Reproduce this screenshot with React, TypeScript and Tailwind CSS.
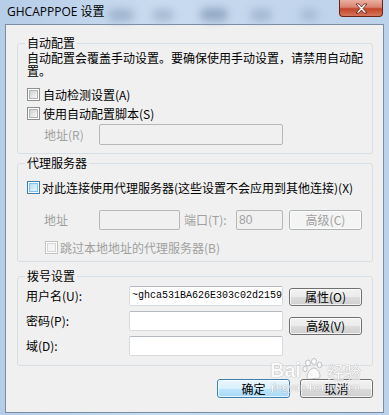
import React from 'react';

const cjk = { fontFamily: "'Noto Sans CJK SC', 'Noto Sans', sans-serif" };

function CheckBox({ tone = 'normal' }: { tone?: 'normal' | 'hot' | 'off' }) {
  const outer =
    tone === 'hot' ? 'border-[#3c7fb1]' : tone === 'off' ? 'border-[#c3c3c3]' : 'border-[#8e8f8f]';
  const inner =
    tone === 'hot'
      ? 'border-[#79c6f9] bg-[linear-gradient(135deg,#b9def6,#eaf6fd)]'
      : tone === 'off'
        ? 'border-[#d6d6d6] bg-[#f4f4f4]'
        : 'border-[#b3b3b3] bg-[linear-gradient(135deg,#cfd1d4,#f7f7f7)]';
  return (
    <div className={`w-[13px] h-[13px] shrink-0 border ${outer} bg-white p-px`}>
      <div className={`w-full h-full border ${inner}`} />
    </div>
  );
}

function Field({ w, h = 'h-[21px]', off = false, children }: { w: string; h?: string; off?: boolean; children?: React.ReactNode }) {
  return (
    <div
      className={`${w} ${h} shrink-0 rounded-[2px] border flex items-center px-[2px] ${
        off ? 'border-[#b4b8bb] bg-[#f0f0f0]' : 'border-[#d7dbe0] border-t-[#b5b9c0] bg-white'
      }`}
    >
      {children}
    </div>
  );
}

function Button({ w = 'w-[73px]', h = 'h-[19px]', off = false, primary = false, children }: { w?: string; h?: string; off?: boolean; primary?: boolean; children: React.ReactNode }) {
  const skin = off
    ? 'border-[#adb2b5] bg-[#f4f4f4] text-[#a0a0a0]'
    : primary
      ? 'border-[#3c7fb1] bg-[linear-gradient(#eaf6fd,#d9f0fc_50%,#bee6fd_50%,#a7d9f5)] text-black'
      : 'border-[#707070] bg-[linear-gradient(#f2f2f2,#ebebeb_50%,#dddddd_50%,#cfcfcf)] text-black';
  return (
    <div className={`${w} ${h} shrink-0 rounded-[3px] border ${skin} flex items-center justify-center`}>
      <div className="w-full h-full rounded-[2px] border border-white/70 flex items-center justify-center text-[12px] leading-none">
        {children}
      </div>
    </div>
  );
}

function Group({ title, className = '', children }: { title: string; className?: string; children: React.ReactNode }) {
  return (
    <fieldset className={`border border-[#d5dfe5] rounded-[3px] px-0 ${className}`}>
      <legend className="ml-[7px] px-[2px] text-[12px] leading-[14px]">{title}</legend>
      {children}
    </fieldset>
  );
}

export default function App() {
  return (
    <div
      className="relative w-[389px] h-[415px] overflow-hidden flex flex-col bg-[linear-gradient(90deg,#b6cde8,#c9dbef_40%,#bcd1ea)] text-black"
      style={cjk}
    >
      {/* Title bar */}
      <div className="relative h-[24px] shrink-0 flex items-start">
        <div className="absolute left-[108px] top-[9px] w-[26px] h-[12px] rounded-full bg-[#8ea4bf] blur-[4px] opacity-70" />
        <div className="absolute left-[152px] top-[9px] w-[22px] h-[12px] rounded-full bg-[#8ea4bf] blur-[4px] opacity-60" />
        <div className="absolute left-[200px] top-[8px] w-[28px] h-[13px] rounded-full bg-[#7e95b2] blur-[4px] opacity-70" />
        <div className="absolute left-[250px] top-[9px] w-[22px] h-[12px] rounded-full bg-[#8ea4bf] blur-[4px] opacity-60" />
        <div className="absolute left-[300px] top-[9px] w-[18px] h-[12px] rounded-full bg-[#8ea4bf] blur-[4px] opacity-50" />
        <div
          className="relative pl-[7px] pt-[4px] text-[12px] leading-[16px]"
          style={{ fontFamily: "'Open Sans', 'Noto Sans CJK SC', sans-serif" }}
        >
          GHCAPPPOE 设置
        </div>
        <div className="relative ml-auto mr-[6px] w-[44px] h-[17px] rounded-b-[4px] border border-t-0 border-[#6b2518] bg-[linear-gradient(#eab0a2,#d98470_45%,#c3442a_55%,#d5775b)] flex items-center justify-center">
          <svg width="13" height="11" viewBox="0 0 13 11">
            <path
              d="M1 1h3l2.5 3L9 1h3L8 5.5 12 10H9L6.5 7 4 10H1l4-4.5z"
              fill="#ffffff"
              stroke="#5a1f14"
              strokeWidth="0.8"
              strokeLinejoin="round"
            />
          </svg>
        </div>
      </div>

      {/* Client panel */}
      <div className="mx-[5px] mb-[2px] flex-1 border border-[#7c8da3] bg-[#f0f0f0] pt-[11px] pl-[11px] pr-[10px] flex flex-col">
        <Group title="自动配置" className="pb-[8px]">
          <div className="ml-[9px] mt-[1px] text-[12px] leading-[13px]">
            自动配置会覆盖手动设置。要确保使用手动设置，请禁用自动配
            <br />
            置。
          </div>
          <div className="ml-[9px] mt-[8px] h-[19px] flex items-center gap-[3px] text-[12px]">
            <CheckBox />
            <span>自动检测设置(A)</span>
          </div>
          <div className="ml-[9px] h-[19px] flex items-center gap-[3px] text-[12px]">
            <CheckBox />
            <span>使用自动配置脚本(S)</span>
          </div>
          <div className="ml-[26px] mt-px h-[21px] flex items-center text-[12px] text-[#a0a0a0]">
            <span className="w-[55px]">地址(R)</span>
            <Field w="w-[184px]" off />
          </div>
        </Group>

        <Group title="代理服务器" className="mt-[2px] pb-[4px]">
          <div className="ml-[9px] mt-[8px] h-[19px] flex items-center gap-[2px] text-[12px]">
            <CheckBox tone="hot" />
            <span>对此连接使用代理服务器(这些设置不会应用到其他连接)(X)</span>
          </div>
          <div className="ml-[26px] mt-[12px] h-[22px] flex items-center text-[12px] text-[#a0a0a0]">
            <span className="w-[55px]">地址</span>
            <Field w="w-[81px]" h="h-[20px]" off />
            <span className="ml-[4px] w-[52px]">端口(T):</span>
            <Field w="w-[47px]" h="h-[20px]" off>
              <span className="text-[12px] text-[#a0a0a0]" style={{ fontFamily: "'Liberation Sans', sans-serif" }}>
                80
              </span>
            </Field>
            <div className="ml-[6px]">
              <Button h="h-[20px]" off>
                高级(C)
              </Button>
            </div>
          </div>
          <div className="ml-[27px] mt-[7px] h-[19px] flex items-center gap-[2px] text-[12px] text-[#a0a0a0]">
            <CheckBox tone="off" />
            <span>跳过本地地址的代理服务器(B)</span>
          </div>
        </Group>

        <Group title="拨号设置" className="mt-[7px] pb-[9px]">
          <div className="mt-[3px] flex text-[12px]">
            <div className="flex flex-col gap-[5px]">
              {[
                ['用户名(U):', '~ghca531BA626E303c02d2159'],
                ['密码(P):', ''],
                ['域(D):', ''],
              ].map(([label, value]) => (
                <div key={label} className="h-[20px] flex items-center">
                  <span className="ml-[8px] w-[103px]">{label}</span>
                  <Field w="w-[154px]" h="h-[20px]">
                    <span
                      className="text-[10px] leading-none whitespace-nowrap"
                      style={{ fontFamily: "'Liberation Mono', monospace" }}
                    >
                      {value}
                    </span>
                  </Field>
                </div>
              ))}
            </div>
            <div className="ml-[6px] flex flex-col">
              <div className="mt-[2px]">
                <Button h="h-[18px]">属性(O)</Button>
              </div>
              <div className="mt-[11px]">
                <Button h="h-[18px]">高级(V)</Button>
              </div>
            </div>
          </div>
        </Group>

        <div className="mt-[13px] flex justify-end gap-[10px]">
          <Button primary>确定</Button>
          <Button>取消</Button>
        </div>
      </div>

      {/* Baidu watermark */}
      <div className="absolute left-[270px] top-[358px] flex flex-col items-center text-white opacity-70 [text-shadow:0_0_1px_#8a8a8a,0_0_1px_#8a8a8a] pointer-events-none">
        <div className="flex items-end leading-none">
          <span className="text-[20px] font-bold" style={{ fontFamily: "'Liberation Sans', sans-serif" }}>
            Bai
          </span>
          <svg width="22" height="22" viewBox="0 0 22 22" className="mx-px">
            <g fill="#ffffff" stroke="#9a9a9a" strokeWidth="0.8">
              <ellipse cx="6" cy="5" rx="2.5" ry="3" />
              <ellipse cx="12" cy="3.5" rx="2.5" ry="3" />
              <ellipse cx="17.5" cy="7" rx="2.3" ry="2.8" />
              <ellipse cx="3" cy="11" rx="2.2" ry="2.7" />
              <path d="M5 19c0-5 4-9 7-9s6 4 6 8c0 3-3 3-6 2.5-3 .5-7 1.5-7-1.5z" />
            </g>
          </svg>
          <span className="text-[17px] ml-[2px]">经验</span>
        </div>
        <span className="mt-[2px] text-[11px] leading-none" style={{ fontFamily: "'Liberation Sans', sans-serif" }}>
          jingyan.baidu.com
        </span>
      </div>
    </div>
  );
}
